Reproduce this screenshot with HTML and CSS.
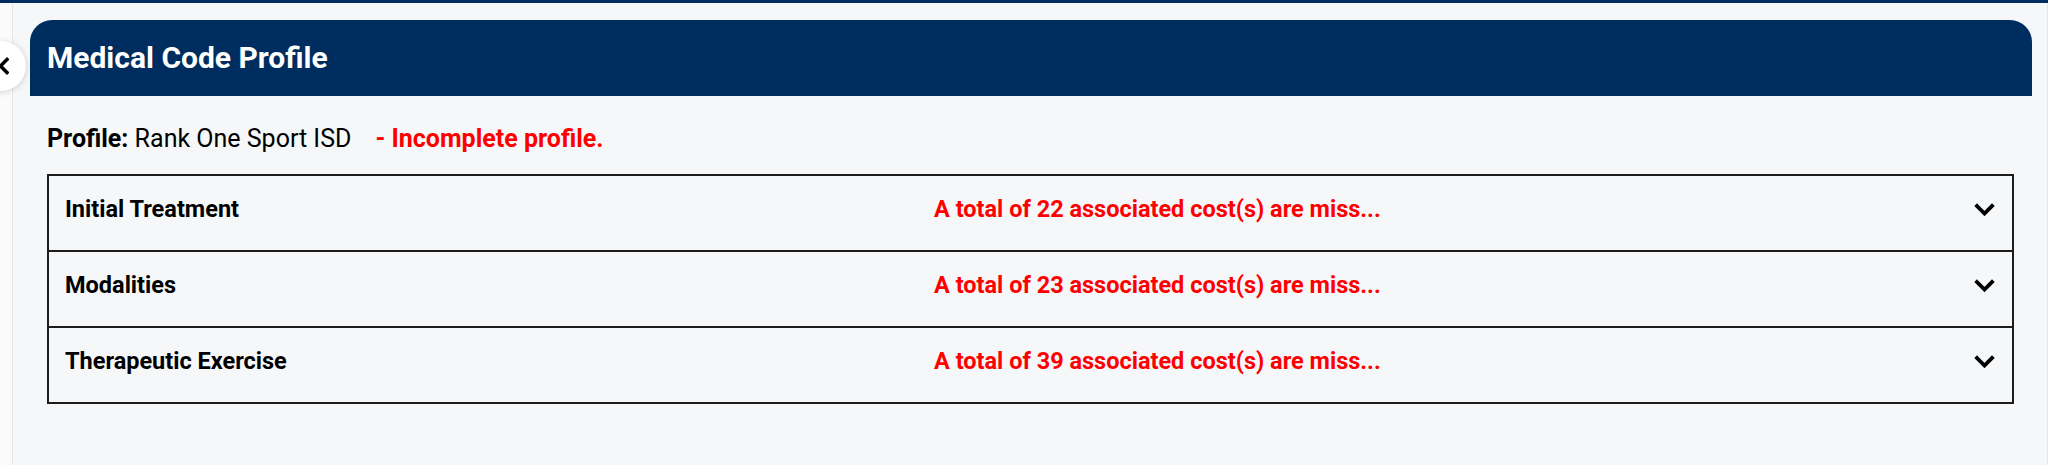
FILE: index.html
```html
<!DOCTYPE html>
<html lang="en">
<head>
<meta charset="utf-8">
<title>Medical Code Profile</title>
<link rel="stylesheet" href="styles.css">
</head>
<body>
<div class="topbar"></div>
<div class="layout">
  <aside class="sidebar"></aside>
  <main class="content">
    <button class="collapse-btn" aria-label="Collapse">
      <svg width="16" height="18" viewBox="0 0 16 18"><path d="M14 2.5 L7.5 9 L14 15.5" fill="none" stroke="#000" stroke-width="3.4" stroke-linecap="square"/></svg>
    </button>
    <section class="card">
      <header class="card-header"><h1 class="card-title">Medical Code Profile</h1></header>
      <div class="card-body">
        <p class="profile-line"><strong>Profile:</strong> Rank One Sport ISD<span class="warn">- Incomplete profile.</span></p>
        <div class="accordion">
          <div class="row">
            <span class="row-label">Initial Treatment</span>
            <span class="row-msg">A total of 22 associated cost(s) are miss...</span>
            <svg class="chev" width="21" height="14" viewBox="0 0 21 14"><path d="M3 3 L10.5 10.5 L18 3" fill="none" stroke="#000" stroke-width="3.8" stroke-linecap="square"/></svg>
          </div>
          <div class="row">
            <span class="row-label">Modalities</span>
            <span class="row-msg">A total of 23 associated cost(s) are miss...</span>
            <svg class="chev" width="21" height="14" viewBox="0 0 21 14"><path d="M3 3 L10.5 10.5 L18 3" fill="none" stroke="#000" stroke-width="3.8" stroke-linecap="square"/></svg>
          </div>
          <div class="row">
            <span class="row-label">Therapeutic Exercise</span>
            <span class="row-msg">A total of 39 associated cost(s) are miss...</span>
            <svg class="chev" width="21" height="14" viewBox="0 0 21 14"><path d="M3 3 L10.5 10.5 L18 3" fill="none" stroke="#000" stroke-width="3.8" stroke-linecap="square"/></svg>
          </div>
        </div>
      </div>
    </section>
  </main>
</div>
</body>
</html>
```
FILE: styles.css
```css
* { box-sizing: border-box; }
html, body { margin: 0; padding: 0; }
body {
  font-family: Roboto, "Liberation Sans", Arial, sans-serif;
  background: #f6f7f9;
  color: #000;
  height: 465px;
  overflow: hidden;
}
.topbar { height: 3px; background: #002d5f; }
.layout {
  display: flex;
  height: 462px;
  border-right: 1px solid #e4e5e8;
}
.sidebar {
  width: 13px;
  flex: 0 0 13px;
  background: #fbfbfc;
  border-right: 1px solid #e6e7ea;
}
.content {
  position: relative;
  flex: 1;
  padding: 17px 15px 0 17px;
}
.collapse-btn {
  position: absolute;
  left: -37px;
  top: 38px;
  width: 50px;
  height: 50px;
  border-radius: 50%;
  border: none;
  background: #fff;
  box-shadow: 0 1px 6px rgba(0,0,0,0.18);
  padding: 0;
  display: flex;
  align-items: center;
  justify-content: center;
}
.card-header {
  height: 76px;
  background: #002d5f;
  border-radius: 22px 22px 0 0;
  display: flex;
  align-items: center;
  padding-left: 17px;
}
.card-title {
  margin: 0;
  color: #fff;
  font-size: 30px;
  font-weight: 700;
  line-height: 1;
  padding-bottom: 1px;
}
.card-body { padding: 0 18px 0 17px; }
.profile-line {
  margin: 0;
  padding-top: 30px;
  height: 78px;
  font-size: 25px;
  line-height: 26px;
}
.profile-line strong { font-weight: 700; }
.warn {
  color: #ff0000;
  font-weight: 700;
  margin-left: 24px;
}
.accordion {
  border: 2px solid #1d1d1d;
}
.row {
  display: grid;
  grid-template-columns: 869px 1fr auto;
  align-items: start;
  height: 76px;
  padding: 20px 17px 0 16px;
  border-top: 2px solid #1d1d1d;
  font-size: 23.5px;
  line-height: 26px;
  font-weight: 700;
}
.row:first-child { border-top: none; height: 74px; }
.row-label { color: #000; }
.row-msg { color: #ff0000; }
.chev { margin-top: 7px; display: block; }
```
